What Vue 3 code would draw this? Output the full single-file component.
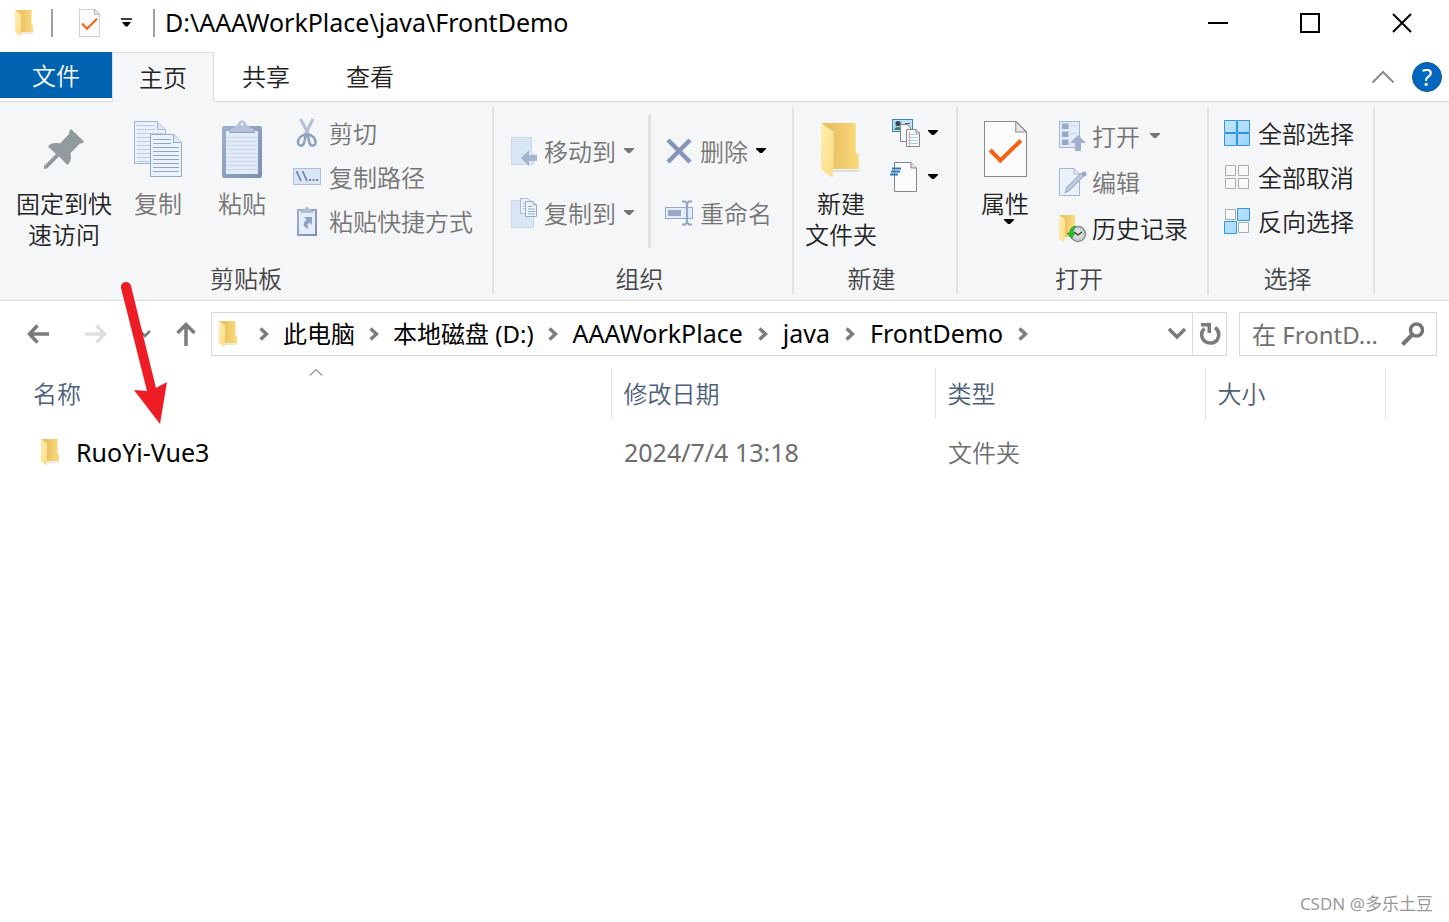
<script setup>
const tabs = ['共享', '查看']
const crumbs = [
  { text: '此电脑' },
  { text: '本地磁盘 (D:)' },
  { text: 'AAAWorkPlace', latin: true },
  { text: 'java', latin: true },
  { text: 'FrontDemo', latin: true }
]
const files = [{ name: 'RuoYi-Vue3', modified: '2024/7/4 13:18', type: '文件夹', size: '' }]
const lines = [0, 1, 2, 3, 4, 5, 6, 7, 8, 9]
</script>

<template>
  <div class="window">
    <svg class="defs" width="0" height="0" aria-hidden="true">
      <defs>
        <linearGradient id="g-back" x1="0" x2="1"><stop offset="0.3" stop-color="#e9c265" /><stop offset="1" stop-color="#fadb7c" /></linearGradient>
        <linearGradient id="g-front" x1="0" x2="1" y2="1"><stop offset="0" stop-color="#ffeeb0" /><stop offset="1" stop-color="#fcdc82" /></linearGradient>
        <linearGradient id="g-blue" x1="0" x2="1" y2="1"><stop offset="0" stop-color="#c3e6fc" /><stop offset="1" stop-color="#9dd5fb" /></linearGradient>
        <linearGradient id="g-clip" x1="0" x2="1" y2="1"><stop offset="0" stop-color="#9fb0cb" /><stop offset="1" stop-color="#7b8fb5" /></linearGradient>
        <symbol id="folder" viewBox="0 0 38 56" preserveAspectRatio="none">
          <path d="M12 47H39L34 49H12Z" fill="#dcdcdc" />
          <path d="M0 0H33V29L36 32V46H6Z" fill="url(#g-back)" />
          <path d="M0 0L12 9V40L11 55L0 46Z" fill="url(#g-front)" />
        </symbol>
        <symbol id="props" viewBox="0 0 42 56" preserveAspectRatio="none">
          <path d="M.5.5H31L41.500 11V55.500H.5Z" fill="#fbfbfc" stroke="#8a8a8a" />
          <path d="M31 .5V11H41.500Z" fill="#e6e6e8" stroke="#8a8a8a" />
          <path d="M6 29L16 39.500L36 19.500" fill="none" stroke="#f6600f" stroke-width="4" />
        </symbol>
        <symbol id="chev" viewBox="0 0 10 14"><path d="M1.500 1.500L7.500 7L1.500 12.500" fill="none" stroke="#7d7d7d" stroke-width="3.500" /></symbol>
        <symbol id="down" viewBox="0 0 10 6"><path d="M0 0H10V1L6 5H4L0 1Z" fill="currentColor" /></symbol>
      </defs>
    </svg>

    <header class="titlebar">
      <svg class="title-folder" width="19" height="27"><use href="#folder" /></svg>
      <span class="bar"></span>
      <button class="plain quick" aria-label="属性"><svg width="21" height="28"><use href="#props" /></svg></button>
      <button class="plain custom" aria-label="自定义快速访问工具栏">
        <svg width="12" height="10" viewBox="0 0 12 10"><path d="M0 1H11" stroke="#000" stroke-width="1.500" /><path d="M1 4H10L6.500 8.500H4.500Z" /></svg>
      </button>
      <span class="bar"></span>
      <h1>D:\AAAWorkPlace\java\FrontDemo</h1>
      <div class="controls">
        <button class="plain" aria-label="最小化"><svg width="20" height="20"><path d="M0 10H20" stroke="#000" stroke-width="2" /></svg></button>
        <button class="plain" aria-label="最大化"><svg width="20" height="20"><rect x="1" y="1" width="18" height="18" fill="none" stroke="#000" stroke-width="2" /></svg></button>
        <button class="plain" aria-label="关闭"><svg width="20" height="20"><path d="M1 1L19 19M19 1L1 19" stroke="#000" stroke-width="2" /></svg></button>
      </div>
    </header>

    <nav class="tabs">
      <button class="plain file">文件</button>
      <button class="plain tab active">主页</button>
      <button v-for="t in tabs" :key="t" class="plain tab">{{ t }}</button>
      <div class="help-area">
        <button class="plain" aria-label="最小化功能区"><svg width="24" height="14"><path d="M1.500 12.500L12 2L22.500 12.500" fill="none" stroke="#8c8c8c" stroke-width="2" /></svg></button>
        <button class="plain help" aria-label="帮助">?</button>
      </div>
    </nav>

    <section class="ribbon">
      <div class="group clipboard">
        <div class="body">
          <button class="plain big pin">
            <span class="pic">
              <svg width="42" height="42" viewBox="0 0 42 42"><path d="M28 1L41 13.500C40.500 15 39 15.500 37 15.500L27.500 25C28.500 30 28 34 24.500 37L16 28.500L4 40.500L1 41V38L13 26L5 18.500C8 15 12 14.500 17 15.500L26 6C26 4 26.500 2 28 1Z" fill="#919a9f" /></svg>
            </span>
            <span>固定到快<br />速访问</span>
          </button>
          <button class="plain big copy" disabled>
            <span class="pic">
              <svg width="48" height="56" viewBox="0 0 48 56">
                <path d="M.5.5H23.500L31.500 8.500V42.500H.5Z" fill="#e9f1fb" stroke="#a4b4d0" /><path d="M23.500.5V8.500H31.500" fill="#dbe7f6" stroke="#a4b4d0" />
                <path v-for="i in lines" :key="i" :d="`M3 ${4.5 + i * 4}H${i < 2 ? 21 : 29}`" stroke="#bccae0" />
                <path d="M16.500 13.500H40L47.500 21.500V55.500H16.500Z" fill="#eaf3fd" stroke="#98a9c8" /><path d="M39.500 13.500V21.500H47.500" fill="#dbe7f6" stroke="#98a9c8" />
                <path v-for="i in lines.slice(0, 9)" :key="'b' + i" :d="`M19 ${18.5 + i * 4}H${i < 2 ? 37 : 45}`" stroke="#93a5c5" />
              </svg>
            </span>
            <span>复制</span>
          </button>
          <button class="plain big paste" disabled>
            <span class="pic">
              <svg width="40" height="58" viewBox="0 0 40 58">
                <rect y="6" width="40" height="52" rx="2" fill="url(#g-clip)" /><rect x="4" y="11" width="32" height="43" fill="#e2ecf9" />
                <path v-for="i in lines.slice(0, 9)" :key="i" :d="`M4 ${17.5 + i * 4}H36`" stroke="#cbd8ea" />
                <path d="M7 12C7 8 13 8 15 5L17 2C18 0 22 0 23 2L25 5C27 8 33 8 33 12Z" fill="#b4c2d9" /><circle cx="20" cy="4" r="1.500" fill="#edf2f8" /><path d="M7 12.500H33" stroke="#8f9fbe" />
              </svg>
            </span>
            <span>粘贴</span>
          </button>
          <div class="list">
            <button class="plain row" disabled>
              <svg width="28" height="30" viewBox="0 0 28 30"><path d="M7.500 1L16.500 18M20 1L11.500 18" stroke="#b3c0d4" stroke-width="3" /><path d="M13 16.500C8 17 4.500 21 5 25C6 29 10 28 11 25C12 22 12 19 13 16.500ZM14.500 16.500C20 17 23 21 22.500 25C21.500 29 17.500 28 16.500 25C15.500 22 15.500 19 14.500 16.500Z" fill="none" stroke="#8fa0c0" stroke-width="2.500" /></svg>
              <span>剪切</span>
            </button>
            <button class="plain row" disabled>
              <svg width="28" height="18" viewBox="0 0 28 18"><rect x=".5" y=".5" width="27" height="16" fill="#dbe6f5" stroke="#b0bed4" /><path d="M3.500 3L8 13M9.500 3L14 13" stroke="#6f83a9" stroke-width="1.800" /><path d="M16 12H18M19.500 12H21.500M23 12H25" stroke="#6f83a9" stroke-width="2" /></svg>
              <span>复制路径</span>
            </button>
            <button class="plain row" disabled>
              <svg width="28" height="30" viewBox="0 0 28 30"><rect x="5" y="4" width="18" height="25" fill="#e4eefb" stroke="url(#g-clip)" stroke-width="2" /><path d="M7 7C8 4 11 4 12 2.500C12 .5 16 .5 16 2.500C17 4 20 4 21 7Z" fill="#b1bfd6" /><path d="M11 11H19V19L16.500 16.500C14 18 14 20 15.500 22.500C11 22 8.500 18 13.500 13.500Z" fill="#8fa0c2" /></svg>
              <span>粘贴快捷方式</span>
            </button>
          </div>
        </div>
        <div class="label">剪贴板</div>
      </div>

      <div class="group organize">
        <div class="body">
          <div class="list wide">
            <button class="plain row" disabled>
              <svg width="26" height="30" viewBox="0 0 26 30"><path d="M.5 1.500H20.500V16L22.500 18V28.500H.5Z" fill="#dae6f5" stroke="#c9d6ea" /><path d="M10 22L18 14V19H26V25H18V30Z" fill="#a4b3ce" /></svg>
              <span>移动到</span><svg class="drop" width="10" height="6"><use href="#down" /></svg>
            </button>
            <button class="plain row" disabled>
              <svg width="26" height="30" viewBox="0 0 26 30"><path d="M.5 2.500H20V18L22.500 20V29.500H.5Z" fill="#dae6f5" stroke="#c9d6ea" /><path d="M9.500.5H17L20.500 4V15.500H9.500Z" fill="#eef4fc" stroke="#aab9d3" /><path d="M11.500 5H17M11.500 8H15M11.500 11H15" stroke="#aab9d3" /><path d="M14.500 3.500H22L25.500 7V18.500H14.500Z" fill="#eef4fc" stroke="#98a9c8" /><path d="M22 3.500V7H25.500M17 8.500H21M17 11H24M17 13.500H24M17 16H24" fill="none" stroke="#98a9c8" /></svg>
              <span>复制到</span><svg class="drop" width="10" height="6"><use href="#down" /></svg>
            </button>
          </div>
          <span class="divider"></span>
          <div class="list wide">
            <button class="plain row" disabled>
              <svg width="28" height="26" viewBox="0 0 28 26"><path d="M3 2L25 24M25 2L3 24" stroke="#8495b7" stroke-width="4.500" /></svg>
              <span>删除</span><svg class="drop dark" width="10" height="6"><use href="#down" /></svg>
            </button>
            <button class="plain row" disabled>
              <svg width="28" height="26" viewBox="0 0 28 26"><rect x=".5" y="7.500" width="27" height="11" fill="#e4eefb" stroke="#98a9c8" /><rect x="3" y="10" width="13" height="6" fill="#98a9c8" /><path d="M17 1.500H20L22 3.500L24 1.500H27M22 3V23M17 24.500H20L22 22.500L24 24.500H27" fill="none" stroke="#93a4c4" stroke-width="2.200" /></svg>
              <span>重命名</span>
            </button>
          </div>
        </div>
        <div class="label">组织</div>
      </div>

      <div class="group new">
        <div class="body">
          <button class="plain big">
            <span class="pic"><svg width="40" height="60"><use href="#folder" y="4" width="40" height="56" /></svg></span>
            <span>新建<br />文件夹</span>
          </button>
          <div class="list small">
            <button class="plain row" aria-label="新建项目">
              <svg width="30" height="30" viewBox="0 0 30 30"><rect x="2.500" y="1.500" width="20" height="12" fill="#c8e2f6" stroke="#3f83b3" /><rect x="4" y="3" width="8" height="9" fill="#9fd3e4" /><circle cx="8" cy="5.500" r="2.500" fill="#35404a" /><path d="M4 12C5 8 11 8 12 12Z" fill="#3f7a5e" /><path d="M15 5.500H20" stroke="#467" /><path d="M10.500 6.500H17L20.500 9V23.500H10.500Z" fill="#f8f9fa" stroke="#888" /><path d="M16.500 11.500H26L29.500 15V28.500H16.500Z" fill="#fff" stroke="#858585" /><path d="M26 11.500V15H29.500" fill="none" stroke="#858585" /><path d="M18 16.500H28M18 19.500H28M18 22.500H28M18 25.500H28" stroke="#a8d0ed" /><path d="M19.500 13V28" stroke="#f0a0a0" /></svg>
              <svg class="drop dark" width="10" height="6"><use href="#down" /></svg>
            </button>
            <button class="plain row" aria-label="轻松访问">
              <svg width="30" height="30" viewBox="0 0 30 30"><path d="M4.500.5H21L26.500 6V29.500H4.500Z" fill="#fafbfc" stroke="#858585" /><path d="M21 .5V6H26.500" fill="#e4e4e4" stroke="#858585" /><path d="M2 6.500H11M1 9.500H10M0 12.500H8" stroke="#2e78b8" stroke-width="1.800" /></svg>
              <svg class="drop dark" width="10" height="6"><use href="#down" /></svg>
            </button>
          </div>
        </div>
        <div class="label">新建</div>
      </div>

      <div class="group open">
        <div class="body">
          <button class="plain big">
            <span class="pic"><svg width="43" height="56"><use href="#props" /></svg></span>
            <span>属性</span>
            <svg width="20" height="6" viewBox="0 0 20 6"><path d="M9 0H19V1L15 5H13L9 1Z" /></svg>
          </button>
          <div class="list mid">
            <button class="plain row" disabled>
              <svg width="28" height="30" viewBox="0 0 28 30"><rect x=".5" y=".5" width="20" height="26" fill="#e2ecf8" stroke="#a4b4d0" /><path d="M3 2.500H9.500V8H3ZM3 10.500H9.500V16H3ZM3 18.500H9.500V24H3Z" fill="#98a9c8" /><path d="M12 4.500H18M12 12.500H18" stroke="#c5d2e5" /><path d="M19 14L27 22H22V30H16V22H11Z" fill="#a0b0cd" /></svg>
              <span>打开</span><svg class="drop" width="10" height="6"><use href="#down" /></svg>
            </button>
            <button class="plain row" disabled>
              <svg width="28" height="30" viewBox="0 0 28 30"><path d="M.5 1.500H15L20.500 7V28.500H.5Z" fill="#eaf2fc" stroke="#a4b4d0" /><path d="M15 1.500V7H20.500" fill="none" stroke="#a4b4d0" /><path d="M6 26L8 20L22 6L25 9L11 23Z" fill="#bdcade" stroke="#98a9c8" /><circle cx="25" cy="7" r="2.500" fill="#98a9c8" /></svg>
              <span>编辑</span>
            </button>
            <button class="plain row">
              <svg width="28" height="30" viewBox="0 0 28 30"><path d="M0 2H16V24H0Z" fill="url(#g-back)" /><path d="M0 2L6 6V24L5 29L0 25Z" fill="url(#g-front)" /><circle cx="19" cy="21" r="7.500" fill="#d9dcdd" stroke="#858b8e" stroke-width="1.500" /><circle cx="19" cy="21" r="5.500" fill="none" stroke="#8b9194" stroke-dasharray="1 2" /><path d="M15 19L19 22L23 19" fill="none" stroke="#333" stroke-width="1.200" /><path d="M17 13C13 13 11 16 11 20H8L12.500 25.500L16 20H14C14 17 15 15 17 13Z" fill="#27bd34" stroke="#169322" stroke-width=".6" /></svg>
              <span>历史记录</span>
            </button>
          </div>
        </div>
        <div class="label">打开</div>
      </div>

      <div class="group select">
        <div class="body">
          <div class="list">
            <button class="plain row">
              <svg width="26" height="26" viewBox="0 0 26 26"><path d="M.5.5H12.500V12.500H.5ZM13.500.5H25.500V12.500H13.500ZM.5 13.500H12.500V25.500H.5ZM13.500 13.500H25.500V25.500H13.500Z" fill="url(#g-blue)" stroke="#3394e0" /></svg>
              <span>全部选择</span>
            </button>
            <button class="plain row">
              <svg width="26" height="26" viewBox="0 0 26 26"><path d="M1.500 1.500H11.500V11.500H1.500ZM14.500 1.500H24.500V11.500H14.500ZM1.500 14.500H11.500V24.500H1.500ZM14.500 14.500H24.500V24.500H14.500Z" fill="#f8f8f8" stroke="#ababab" /></svg>
              <span>全部取消</span>
            </button>
            <button class="plain row">
              <svg width="26" height="26" viewBox="0 0 26 26"><path d="M1.500 1.500H11.500V11.500H1.500ZM14.500 14.500H24.500V24.500H14.500Z" fill="#f8f8f8" stroke="#ababab" /><path d="M13.500.5H25.500V12.500H13.500ZM.5 13.500H12.500V25.500H.5Z" fill="url(#g-blue)" stroke="#3394e0" /></svg>
              <span>反向选择</span>
            </button>
          </div>
        </div>
        <div class="label">选择</div>
      </div>
    </section>

    <section class="location">
      <button class="plain nav" aria-label="后退"><svg width="22" height="20"><path d="M10.500 1.500L2.500 10L10.500 18.500M2 10H22" fill="none" stroke="#7b7b7b" stroke-width="3.500" /></svg></button>
      <button class="plain nav" aria-label="前进"><svg width="22" height="20"><path d="M11.500 1.500L19.500 10L11.500 18.500M20 10H0" fill="none" stroke="#dfdfdf" stroke-width="3.500" /></svg></button>
      <button class="plain recent" aria-label="最近浏览的位置"><svg width="12" height="10"><path d="M1 2L6 7L11 2" fill="none" stroke="#7b7b7b" stroke-width="2.500" /></svg></button>
      <button class="plain up" aria-label="上移"><svg width="20" height="24"><path d="M1.500 11L10 2.500L18.500 11M10 2.500V24" fill="none" stroke="#7b7b7b" stroke-width="3.500" /></svg></button>
      <div class="address">
        <svg class="address-folder" width="19" height="27"><use href="#folder" /></svg>
        <svg width="10" height="14"><use href="#chev" /></svg>
        <template v-for="c in crumbs" :key="c.text">
          <a href="#" :class="{ latin: c.latin }">{{ c.text }}</a>
          <svg width="10" height="14"><use href="#chev" /></svg>
        </template>
        <button class="plain history" aria-label="历史地址"><svg width="20" height="14"><path d="M2 2L10 10L18 2" fill="none" stroke="#7b7b7b" stroke-width="3.500" /></svg></button>
        <button class="plain refresh" aria-label="刷新"><svg width="22" height="24" viewBox="0 0 22 24"><path d="M16 5.500C22.500 10 20 21 11.500 21C3 21 0 11.500 5.500 6.500" fill="none" stroke="#7b7b7b" stroke-width="3.500" /><path d="M2 1H12V11H8.500V4.500H2Z" fill="#7b7b7b" /></svg></button>
      </div>
      <div class="search">
        <input type="text" aria-label="搜索" placeholder="在 FrontD..." />
        <svg width="24" height="24"><circle cx="15.500" cy="8" r="6" fill="none" stroke="#757575" stroke-width="3.500" /><path d="M11.500 12.500L1.500 22.500" stroke="#757575" stroke-width="4" /></svg>
      </div>
    </section>

    <main>
      <table>
        <colgroup><col class="c-name" /><col class="c-date" /><col class="c-type" /><col class="c-size" /><col /></colgroup>
        <thead>
          <tr>
            <th><svg class="sort" width="14" height="8"><path d="M1 7.500L7 1.500L13 7.500" fill="none" stroke="#444" /></svg>名称</th>
            <th>修改日期</th><th>类型</th><th>大小</th><td></td>
          </tr>
        </thead>
        <tbody>
          <tr v-for="f in files" :key="f.name">
            <td><div class="name latin"><svg width="19" height="27"><use href="#folder" /></svg>{{ f.name }}</div></td>
            <td class="latin">{{ f.modified }}</td><td>{{ f.type }}</td><td>{{ f.size }}</td><td></td>
          </tr>
        </tbody>
      </table>
    </main>

    <svg class="pointer" width="50" height="150" viewBox="120 278 50 150" aria-hidden="true">
      <path d="M121 288A5 5 0 0 1 131 286L156 388L167 382L160 424L134 390L147 391Z" fill="#ee1c25" />
    </svg>
    <div class="watermark">CSDN @多乐土豆</div>
  </div>
</template>

<style>
body { margin: 0; background: #fff; }
</style>

<style scoped>
.window { position: relative; min-height: 100vh; background: #fff; color: #000; font: 24px/31px "Noto Sans", "Noto Sans CJK SC", sans-serif; overflow: hidden; }
.defs { position: absolute; }
svg { display: block; flex: none; }
.plain { border: 0; padding: 0; margin: 0; background: none; font: inherit; color: #222; white-space: nowrap; }
.titlebar { display: flex; align-items: center; height: 46px; margin-bottom: 6px; }
.title-folder { margin: 0 17px 0 15px; }
.bar { width: 2px; height: 28px; background: #a0a0a0; }
.quick { margin-left: 26px; }
.custom { margin: 0 20px 0 21px; }
h1 { margin: 0 0 0 10px; font: inherit; font-size: 25px; line-height: 30px; padding-bottom: 2px; white-space: nowrap; }
.controls { display: flex; margin: 0 1px 0 auto; }
.controls button { display: flex; align-items: center; justify-content: center; width: 92px; height: 46px; }
.tabs { display: flex; height: 49px; border-bottom: 1px solid #d9dbdc; font-weight: 350; }
.file { width: 112px; height: 46px; background: #0063b1; color: #fff; }
.tab { padding: 0 28px; }
.tab.active { height: 50px; padding: 0 26px; border: 1px solid #d9dbdc; border-bottom: 0; background: #f5f6f7; }
.help-area { display: flex; align-items: center; gap: 17px; margin: 0 7px 0 auto; }
.help { width: 30px; height: 30px; border-radius: 50%; background: #0067c0; border: 1px solid #15558c; color: #fff; line-height: 28px; font-weight: 400; }
.ribbon { display: flex; background: #f5f6f7; border-bottom: 1px solid #d9dbdc; font-weight: 350; }
.group { display: flex; flex-direction: column; flex: none; margin: 5px 0 6px; border-right: 2px solid #e2e3e4; }
.body { display: flex; align-items: flex-start; min-height: 156px; }
.label { color: #444; text-align: center; padding-right: 7px; }
.clipboard .label { padding-right: 0; }
.big { display: flex; flex-direction: column; align-items: center; padding-top: 11px; }
.pic { display: flex; align-items: center; justify-content: center; height: 62px; margin-bottom: 8px; }
.plain:disabled { color: #757575; }
.pin { margin: 0 22px 0 16px; }
.copy { margin-right: 36px; }
.paste { margin-right: 27px; }
.list { padding: 4px 19px 0 0; }
.row { display: flex; align-items: center; gap: 8px; height: 44px; }
.wide { padding: 13px 20px 0 0; }
.wide .row { height: 62px; gap: 7px; }
.wide .drop { margin-left: 1px; }
.mid { padding-top: 6px; }
.mid .row { height: 46px; gap: 5px; }
.mid .drop { margin-left: 5px; }
.drop { color: #757575; }
.drop.dark { color: #000; }
.organize .body { padding-left: 17px; }
.organize .list:first-child { padding-right: 14px; }
.divider { width: 3px; height: 133px; margin: 8px 14px 0 0; background: #dfe1e3; }
.new .body { padding-left: 11px; }
.new .small { padding-left: 13px; padding-right: 18px; }
.open .big { margin: 0 30px 0 23px; }
.select .body { padding-left: 15px; }
.location { display: flex; align-items: center; padding: 11px 12px 12px 27px; }
.nav { margin-right: 36px; }
.recent { margin: 0 25px 0 -4px; }
.up { margin-right: 15px; }
.address { display: flex; align-items: center; flex: 1; min-width: 0; height: 42px; border: 1px solid #d9d9d9; }
.address a { color: #000; text-decoration: none; margin: 0 14px; padding-bottom: 2px; white-space: nowrap; }
.address a.latin { margin: 0 15px; }
.latin { font-size: 25px; }
.address-folder { margin: 0 21px 0 7px; }
.history { margin: 0 5px 0 auto; }
.refresh { display: flex; align-items: center; justify-content: center; width: 34px; height: 42px; border-left: 1px solid #d9d9d9; }
.search { display: flex; align-items: center; box-sizing: border-box; width: 198px; height: 44px; margin-left: 12px; padding: 0 11px 0 12px; border: 1px solid #d9d9d9; }
.search input { flex: 1; min-width: 0; height: 40px; padding: 0; border: 0; outline: 0; background: none; font: inherit; color: #333; }
.search input::placeholder { color: #707070; opacity: 1; }
table { width: calc(100% - 21px); margin-left: 21px; border-collapse: collapse; table-layout: fixed; }
.c-name { width: 590px; }
.c-date { width: 324px; }
.c-type { width: 270px; }
.c-size { width: 180px; }
th { position: relative; height: 51px; padding: 0 0 0 12px; border-right: 1px solid #e2e2e2; color: #4c607a; font-weight: 350; text-align: left; }
th .sort { position: absolute; top: 0; left: 50%; margin-left: -7px; }
tbody td { height: 66px; padding: 0 0 2px 13px; color: #6d6d6d; font-weight: 350; }
.name { display: flex; align-items: center; gap: 16px; padding-left: 7px; color: #000; font-weight: 400; }
td.latin { font-weight: 400; }
.pointer { position: absolute; left: 120px; top: 278px; }
.watermark { position: absolute; right: 16px; bottom: 4px; color: #999; font-size: 17px; line-height: 28px; }
</style>
